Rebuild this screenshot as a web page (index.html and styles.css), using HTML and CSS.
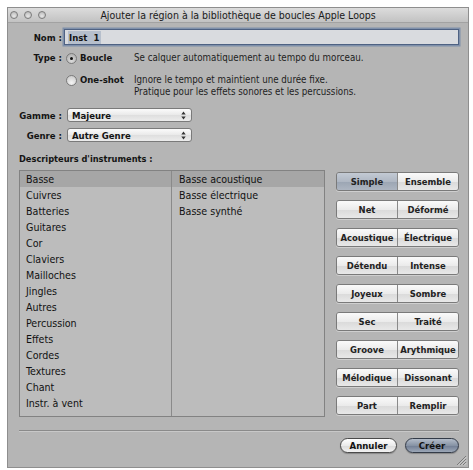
FILE: index.html
```html
<!DOCTYPE html>
<html lang="fr">
<head>
<meta charset="utf-8">
<title>Ajouter la région</title>
<link rel="stylesheet" href="styles.css">
</head>
<body>
<div class="window">
  <div class="titlebar">
    <div class="lights"><span class="light"></span><span class="light"></span><span class="light"></span></div>
    <div class="title">Ajouter la région à la bibliothèque de boucles Apple Loops</div>
    <div></div>
  </div>
  <div class="content">
    <div class="row name-row">
      <span class="lbl">Nom :</span>
      <div class="field"><span class="sel">Inst&nbsp;&nbsp;1</span></div>
    </div>
    <div class="row type-row">
      <span class="lbl">Type :</span>
      <span class="radio on"></span>
      <span class="rlabel">Boucle</span>
      <span class="desc">Se calquer automatiquement au tempo du morceau.</span>
    </div>
    <div class="row type-row oneshot">
      <span class="lbl"></span>
      <span class="radio"></span>
      <span class="rlabel">One-shot</span>
      <span class="desc">Ignore le tempo et maintient une durée fixe.<br>Pratique pour les effets sonores et les percussions.</span>
    </div>
    <div class="row popup-row first">
      <span class="lbl">Gamme :</span>
      <div class="popup"><span>Majeure</span><svg class="arrows" width="5" height="9" viewBox="0 0 5 9"><path d="M0.3 3.6 L2.5 0.6 L4.7 3.6Z M0.3 5.4 L2.5 8.4 L4.7 5.4Z" fill="#333"/></svg></div>
    </div>
    <div class="row popup-row">
      <span class="lbl">Genre :</span>
      <div class="popup"><span>Autre Genre</span><svg class="arrows" width="5" height="9" viewBox="0 0 5 9"><path d="M0.3 3.6 L2.5 0.6 L4.7 3.6Z M0.3 5.4 L2.5 8.4 L4.7 5.4Z" fill="#333"/></svg></div>
    </div>
    <div class="section-title">Descripteurs d'instruments :</div>
    <div class="main">
      <div class="list">
        <div class="col col1">
          <div class="item selected">Basse</div>
          <div class="item">Cuivres</div>
          <div class="item">Batteries</div>
          <div class="item">Guitares</div>
          <div class="item">Cor</div>
          <div class="item">Claviers</div>
          <div class="item">Mailloches</div>
          <div class="item">Jingles</div>
          <div class="item">Autres</div>
          <div class="item">Percussion</div>
          <div class="item">Effets</div>
          <div class="item">Cordes</div>
          <div class="item">Textures</div>
          <div class="item">Chant</div>
          <div class="item">Instr. à vent</div>
        </div>
        <div class="col col2">
          <div class="item selected">Basse acoustique</div>
          <div class="item">Basse électrique</div>
          <div class="item">Basse synthé</div>
        </div>
      </div>
      <div class="segs">
        <div class="seg"><span class="on">Simple</span><span>Ensemble</span></div>
        <div class="seg"><span>Net</span><span>Déformé</span></div>
        <div class="seg"><span>Acoustique</span><span>Électrique</span></div>
        <div class="seg"><span>Détendu</span><span>Intense</span></div>
        <div class="seg"><span>Joyeux</span><span>Sombre</span></div>
        <div class="seg"><span>Sec</span><span>Traité</span></div>
        <div class="seg"><span>Groove</span><span>Arythmique</span></div>
        <div class="seg"><span>Mélodique</span><span>Dissonant</span></div>
        <div class="seg"><span>Part</span><span>Remplir</span></div>
      </div>
    </div>
    <div class="separator"></div>
    <div class="footer">
      <span class="btn">Annuler</span>
      <span class="btn default">Créer</span>
    </div>
  </div>
  <svg class="grip" width="11" height="11" viewBox="0 0 11 11">
    <path d="M1 10 L10 1 M4 10 L10 4 M7 10 L10 7" stroke="#7a7a7a" stroke-width="1"/>
    <path d="M2 10.5 L10.5 2 M5 10.5 L10.5 5 M8 10.5 L10.5 8" stroke="#d8d8d8" stroke-width="0.8"/>
  </svg>
</div>
</body>
</html>
```
FILE: styles.css
```css
html, body {
  margin: 0;
  padding: 0;
  background: #ffffff;
}
body {
  font-family: "DejaVu Sans Condensed", "DejaVu Sans", sans-serif;
  font-size: 10px;
  color: #141414;
}
.window {
  margin: 7px 0 0 7px;
  width: 460px;
  height: 459px;
  border: 1px solid #8e8e8e;
  background: #b5b5b5;
  display: flex;
  flex-direction: column;
  position: relative;
}
.titlebar {
  height: 14px;
  border-bottom: 1px solid #a2a2a2;
  background: linear-gradient(#dcdcdc, #c2c2c2);
  display: grid;
  grid-template-columns: 60px 1fr 60px;
  align-items: center;
}
.lights {
  display: flex;
  gap: 6px;
  padding-left: 2px;
}
.light {
  width: 6px;
  height: 6px;
  border-radius: 50%;
  border: 1px solid #7c7c7c;
  background: radial-gradient(circle at 50% 70%, #e6e6e6, #b4b4b4);
}
.title {
  text-align: center;
  font-size: 10.5px;
  color: #1a1a1a;
  white-space: nowrap;
}
.content {
  flex: 1;
  padding: 6px 9px 0 11px;
  display: flex;
  flex-direction: column;
}
.row {
  display: flex;
  align-items: center;
}
.lbl {
  width: 43px;
  padding-right: 2px;
  text-align: right;
  font-weight: bold;
  font-size: 9.5px;
  white-space: nowrap;
  flex: none;
}
.name-row {
  height: 16px;
}
.field {
  flex: 1;
  height: 14px;
  border: 1px solid #4f6283;
  box-shadow: 0 0 0 1.5px #7f90aa;
  background: #d9dbdf;
  display: flex;
  align-items: center;
  padding-left: 3px;
  font-weight: bold;
  font-size: 9.5px;
}
.sel {
  background: #b6bfcc;
  padding: 0 2px 0 1px;
  line-height: 13px;
}
.type-row {
  margin-top: 7px;
  align-items: flex-start;
  line-height: 12px;
}
.type-row.oneshot {
  margin-top: 10px;
}
.radio {
  flex: none;
  width: 9px;
  height: 9px;
  margin: 1px 3px 0 2px;
  border-radius: 50%;
  border: 1px solid #7b7b7b;
  background: radial-gradient(circle at 50% 75%, #f4f4f4, #c4c4c4);
  display: flex;
  align-items: center;
  justify-content: center;
}
.radio.on {
  background: radial-gradient(circle at 50% 75%, #dcdcdc, #a8a8a8);
}
.radio.on::after {
  content: "";
  width: 3px;
  height: 3px;
  border-radius: 50%;
  background: #111;
}
.rlabel {
  width: 54px;
  flex: none;
  font-weight: bold;
  font-size: 9.5px;
}
.desc {
  color: #1e1e1e;
  font-size: 9.7px;
}
.popup-row {
  margin-top: 6px;
}
.popup-row.first {
  margin-top: 10px;
}
.popup {
  margin-left: 3px;
  width: 114px;
  height: 12px;
  padding: 0 5px 0 4px;
  border: 1px solid #7a7a7a;
  border-radius: 3px;
  background: linear-gradient(#fbfbfb, #e9e9e9 50%, #dedede 51%, #ececec);
  display: flex;
  align-items: center;
  justify-content: space-between;
  font-weight: bold;
  font-size: 9.5px;
}
.arrows {
  display: block;
}
.section-title {
  margin-top: 11px;
  line-height: 12px;
  font-weight: bold;
  font-size: 9.2px;
}
.main {
  margin-top: 5px;
  display: flex;
  gap: 11px;
}
.list {
  width: 304px;
  height: 245px;
  border: 1px solid #828282;
  background: #bcbcbc;
  display: flex;
}
.col1 {
  width: 151px;
  border-right: 1px solid #8a8a8a;
}
.col2 {
  flex: 1;
}
.item {
  height: 16px;
  line-height: 16px;
  padding-left: 6px;
  white-space: nowrap;
  font-size: 10.6px;
  color: #111;
}
.col2 .item {
  padding-left: 7px;
}
.item.selected {
  background: #a6a6a6;
}
.segs {
  width: 123px;
  margin-top: 2px;
  display: flex;
  flex-direction: column;
  gap: 9px;
}
.seg {
  height: 17px;
  display: flex;
  border: 1px solid #7a7a7a;
  border-radius: 3px;
  overflow: hidden;
  box-shadow: 0 1px 0 rgba(255,255,255,0.35);
}
.seg span {
  flex: 1;
  display: flex;
  align-items: center;
  justify-content: center;
  font-weight: bold;
  font-size: 9.4px;
  color: #222;
  background: linear-gradient(#fafafa, #ebebeb 50%, #dadada 51%, #e8e8e8);
  white-space: nowrap;
}
.seg span + span {
  border-left: 1px solid #8a8a8a;
}
.seg span.on {
  background: linear-gradient(#c3cad4, #afb7c3 50%, #9ba5b3 51%, #adb5c1);
}
.separator {
  margin-top: 13px;
  height: 1px;
  background: #8a8a8a;
  border-bottom: 1px solid #c8c8c8;
}
.footer {
  margin-top: 6px;
  display: flex;
  justify-content: flex-end;
  gap: 8px;
}
.btn {
  height: 13px;
  border: 1px solid #4a4a4a;
  border-radius: 8px;
  display: flex;
  align-items: center;
  justify-content: center;
  font-weight: bold;
  font-size: 9.5px;
  color: #111;
  background: linear-gradient(#ffffff, #ebebeb 50%, #dadada 51%, #f2f2f2);
  box-shadow: 0 1px 1px rgba(0,0,0,0.25);
}
.btn:first-child {
  width: 55px;
}
.btn.default {
  width: 52px;
  border-color: #333b48;
  background: linear-gradient(#b3bcc9, #8793a5 50%, #707d93 51%, #9ca7b7);
}
.grip {
  position: absolute;
  right: 1px;
  bottom: 1px;
}
```
